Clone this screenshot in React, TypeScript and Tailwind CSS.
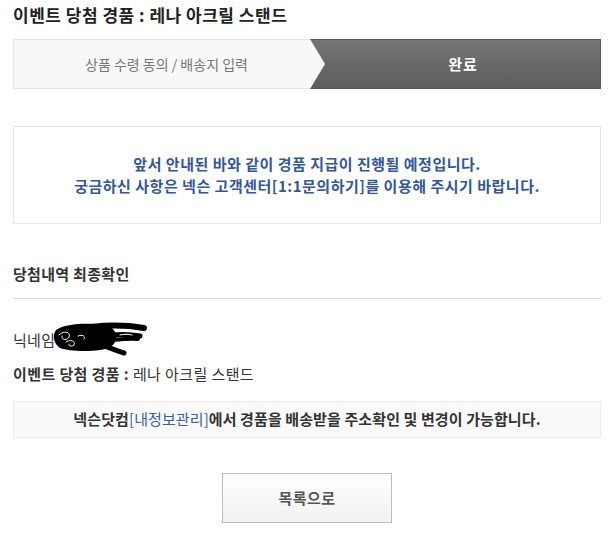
import React from "react";

const font = { fontFamily: '"Noto Sans CJK KR", "Noto Sans", sans-serif' };

function Scribble() {
  return (
    <svg width="96" height="34" viewBox="0 0 96 34" className="absolute left-[39px] top-[-8px]">
      <path
        d="M4 8 C 12 2, 30 1, 46 2 C 56 3, 62 6, 64 12 C 66 20, 60 27, 48 28 C 34 30, 16 29, 8 26 C 2 22, 0 14, 4 8 Z"
        fill="#000"
      />
      <g fill="none" stroke="#000" strokeLinecap="round" strokeLinejoin="round">
        <path d="M40 5 C 56 3, 74 3, 92 6" strokeWidth="6" />
        <path d="M50 14 C 64 12, 78 12, 88 14" strokeWidth="5" />
        <path d="M60 18 C 70 17, 80 16, 86 17" strokeWidth="4" />
        <path d="M46 22 C 54 24, 62 28, 72 31" strokeWidth="5" />
      </g>
      <g fill="none" stroke="#fff" strokeWidth="1" strokeLinecap="round">
        <path d="M7 13 C 12 8, 19 10, 17 15 C 15 19, 9 18, 10 14" />
        <path d="M14 20 C 18 17, 24 19, 22 23 C 20 25, 16 24, 17 22" />
        <path d="M26 14 C 30 12, 34 14, 32 17" />
        <path d="M68 13 C 72 12, 76 12, 80 13" />
      </g>
    </svg>
  );
}

export default function App() {
  return (
    <div className="w-[611px] h-[533px] bg-white pl-[13px] pr-[10px] text-[#333]" style={font}>
      <h1 className="h-[32px] pt-[3px] text-[17px] font-bold leading-[24px] tracking-[0.5px] text-[#222]">
        이벤트 당첨 경품 : 레나 아크릴 스탠드
      </h1>

      <div className="mt-[7px] flex h-[50px]">
        <div className="relative flex w-[297px] items-center justify-center border border-r-0 border-[#e3e3e3] bg-[#f8f8f8] pl-[9px] text-[14px] text-[#777]">
          상품 수령 동의 / 배송지 입력
          <svg width="16" height="50" viewBox="0 0 16 50" className="absolute right-[-16px] top-[-1px] z-10">
            <polygon points="0,0 15,25 0,50" fill="#f8f8f8" />
          </svg>
        </div>
        <div className="flex flex-1 items-center justify-center border border-[#5a5a5a] bg-gradient-to-b from-[#747474] to-[#5e5e5e] pl-[15px] text-[15px] font-bold tracking-[1px] text-white">
          완료
        </div>
      </div>

      <div className="mt-[37px] flex h-[98px] flex-col items-center justify-center border border-[#e6e6e6] text-[15px] font-bold leading-[22px] tracking-[0.5px] text-[#34569a]">
        <p>앞서 안내된 바와 같이 경품 지급이 진행될 예정입니다.</p>
        <p>궁금하신 사항은 넥슨 고객센터[1:1문의하기]를 이용해 주시기 바랍니다.</p>
      </div>

      <h2 className="mt-[38px] text-[15px] font-bold leading-[24px] tracking-[0.3px] text-[#333]">당첨내역 최종확인</h2>
      <div className="mt-[12px] h-px bg-[#d6d6d6]" />

      <div className="relative mt-[31px] text-[15px] leading-[20px] tracking-[0.3px] text-[#333]">
        닉네임
        <Scribble />
      </div>
      <div className="mt-[14px] text-[15px] leading-[20px] tracking-[0.4px] text-[#333]">
        <span className="font-bold">이벤트 당첨 경품 : </span>레나 아크릴 스탠드
      </div>

      <div className="mt-[17px] flex h-[37px] items-center justify-center border border-[#ececec] bg-[#f9f9f9] text-[15px] font-bold tracking-[0.1px] text-[#333]">
        넥슨닷컴<span className="font-normal text-[#3a5ea6]">[내정보관리]</span>에서 경품을 배송받을 주소확인 및 변경이 가능합니다.
      </div>

      <div className="mt-[35px] flex justify-center">
        <button className="h-[50px] w-[170px] border border-[#bdbdbd] bg-gradient-to-b from-white to-[#f1f1f1] text-[15px] font-bold tracking-[0.5px] text-[#555]">
          목록으로
        </button>
      </div>
    </div>
  );
}
